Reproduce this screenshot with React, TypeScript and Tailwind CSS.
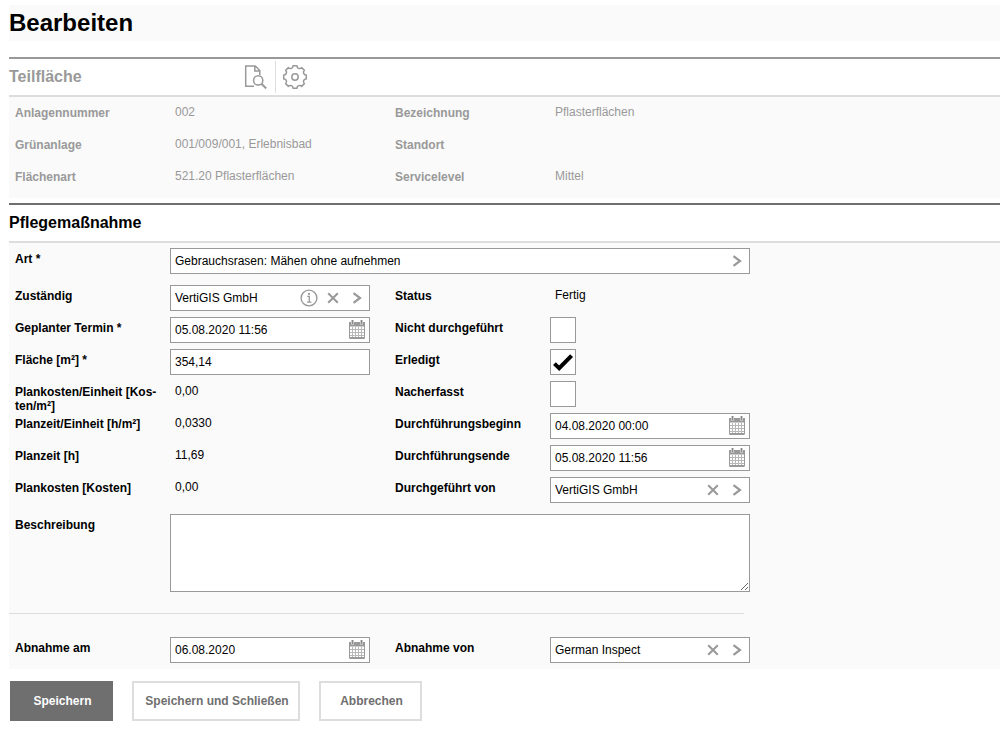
import { useState, type ReactNode } from "react";

const iconButton = "flex h-6 w-6 shrink-0 items-center justify-center text-[#999999]";
const fieldBox = "flex h-[26px] w-full min-w-0 items-center border border-[#999999] bg-white";
const fieldInput = "h-full min-w-0 flex-1 bg-transparent px-1 text-xs text-black outline-none";

function InfoIcon() {
  return (
    <svg width="18" height="18" viewBox="0 0 18 18" fill="none" stroke="currentColor" aria-hidden="true">
      <circle cx="9" cy="9" r="7.9" strokeWidth="1.4" />
      <path d="M7.2 7.4h2.1v5.4M7 13.1h4.4" strokeWidth="1.3" />
      <circle cx="9" cy="4.9" r="1.1" fill="currentColor" stroke="none" />
    </svg>
  );
}

function ClearIcon() {
  return (
    <svg width="12" height="12" viewBox="0 0 12 12" fill="none" stroke="currentColor" strokeWidth="2" aria-hidden="true">
      <path d="M1.2 1.2l9.6 9.6M10.8 1.2L1.2 10.8" />
    </svg>
  );
}

function ChevronIcon() {
  return (
    <svg width="10" height="12" viewBox="0 0 10 12" fill="none" stroke="currentColor" strokeWidth="2.2" aria-hidden="true">
      <path d="M1.5 1.2L8 6l-6.5 4.8" />
    </svg>
  );
}

function CalendarIcon() {
  return (
    <svg width="18" height="20" viewBox="0 0 18 20" fill="none" aria-hidden="true">
      <rect x="1.5" y="2.5" width="15" height="16" rx="1" fill="#ffffff" stroke="#999999" />
      <path d="M1 2h16v4.5H1z" fill="#999999" />
      <path d="M4.5 0v4.5M13.5 0v4.5" stroke="#e4e4e4" strokeWidth="3" />
      <path d="M4.5 0v4M13.5 0v4" stroke="#8a8a8a" strokeWidth="1.6" />
      <path d="M4.5 7v10M7.5 7v10M10.5 7v10M13.5 7v10M2 9.5h14M2 12.5h14M2 15.5h14" stroke="#b8b8b8" strokeWidth="1" />
      <path d="M1.5 18h15" stroke="#999999" strokeWidth="2" />
    </svg>
  );
}

function DocumentSearchIcon() {
  return (
    <svg width="24" height="24" viewBox="0 0 24 24" fill="none" stroke="currentColor" strokeWidth="1.5" aria-hidden="true">
      <path d="M10 21.3H1.7V.9h9.6l4.5 4.7v4.6M10.8 1v5h4.8" />
      <circle cx="14.2" cy="15.4" r="4.6" />
      <path d="M17.4 18.8l4.8 4.6" strokeWidth="2" />
    </svg>
  );
}

function GearIcon() {
  return (
    <svg width="26" height="26" viewBox="0 0 26 26" fill="none" stroke="currentColor" strokeWidth="1.5" strokeLinejoin="round" aria-hidden="true">
      <path d="M11 1.7h4a2.6 2.6 0 0 0 4.6 1.9l2.8 2.8a2.6 2.6 0 0 0 1.9 4.6v4a2.6 2.6 0 0 0-1.9 4.6l-2.8 2.8a2.6 2.6 0 0 0-4.6 1.9h-4a2.6 2.6 0 0 0-4.6-1.9l-2.8-2.8a2.6 2.6 0 0 0-1.9-4.6v-4a2.6 2.6 0 0 0 1.9-4.6l2.8-2.8a2.6 2.6 0 0 0 4.6-1.9z" />
      <circle cx="13" cy="13" r="3.2" />
    </svg>
  );
}

function Row({ id, label, children }: { id?: string; label: ReactNode; children?: ReactNode }) {
  const Tag = id ? "label" : "span";
  return (
    <div className="grid h-8 grid-cols-[155px_minmax(0,1fr)] items-start">
      <Tag htmlFor={id} className="pt-1 pr-2 font-bold">
        {label}
      </Tag>
      {children}
    </div>
  );
}

function Value({ children }: { children?: ReactNode }) {
  return <span className="pt-[3px] pl-[5px]">{children}</span>;
}

function LookupField({ id, initial, info, clearable }: { id: string; initial: string; info?: boolean; clearable?: boolean }) {
  const [value, setValue] = useState(initial);
  return (
    <div className={fieldBox}>
      <input id={id} type="text" value={value} onChange={(e) => setValue(e.target.value)} className={fieldInput} />
      {info && (
        <button type="button" aria-label="Info" className={iconButton}>
          <InfoIcon />
        </button>
      )}
      {clearable && (
        <button type="button" aria-label="Leeren" onClick={() => setValue("")} className={iconButton}>
          <ClearIcon />
        </button>
      )}
      <button type="button" aria-label="Auswählen" className={iconButton}>
        <ChevronIcon />
      </button>
    </div>
  );
}

function DateField({ id, initial }: { id: string; initial: string }) {
  return (
    <div className={fieldBox}>
      <input id={id} type="text" defaultValue={initial} className={fieldInput} />
      <button type="button" aria-label="Kalender" className={iconButton}>
        <CalendarIcon />
      </button>
    </div>
  );
}

function CheckField({ id, checked }: { id: string; checked?: boolean }) {
  return (
    <span className="relative block h-[26px] w-[26px]">
      <input
        id={id}
        type="checkbox"
        defaultChecked={checked}
        className="peer block h-[26px] w-[26px] appearance-none border border-[#999999] bg-white"
      />
      <svg
        viewBox="0 0 26 26"
        fill="none"
        stroke="#000000"
        strokeWidth="4"
        aria-hidden="true"
        className="pointer-events-none absolute inset-0 hidden h-[26px] w-[26px] peer-checked:block"
      >
        <path d="M4.4 14.6l4.8 4.6L21.6 6.6" />
      </svg>
    </span>
  );
}

const columns = "grid max-w-[735px] grid-cols-2 gap-x-[25px]";

export default function App() {
  return (
    <form
      className="pt-[5px] pl-[9px] text-xs leading-[14px] text-black"
      style={{ fontFamily: '"Liberation Sans", Arial, sans-serif' }}
      onSubmit={(e) => e.preventDefault()}
    >
      <h1 className="bg-[#fafafa] text-2xl leading-9 font-bold">Bearbeiten</h1>

      <section className="mt-4 border-t-2 border-[#999999] text-[#999999]">
        <header className="flex h-[38px] items-center border-b-2 border-[#dddddd]">
          <h2 className="w-[227px] text-base font-bold">Teilfläche</h2>
          <button type="button" aria-label="Objekt anzeigen" className="flex h-8 w-10 items-center justify-center border-r border-[#dddddd]">
            <DocumentSearchIcon />
          </button>
          <button type="button" aria-label="Einstellungen" className="flex h-8 w-[38px] items-center justify-center">
            <GearIcon />
          </button>
        </header>
        <div className="bg-[#fafafa] pt-[5px] pl-1.5">
          <div className={columns}>
            <div>
              <Row label="Anlagennummer"><Value>002</Value></Row>
              <Row label="Grünanlage"><Value>001/009/001, Erlebnisbad</Value></Row>
              <Row label="Flächenart"><Value>521.20 Pflasterflächen</Value></Row>
            </div>
            <div>
              <Row label="Bezeichnung"><Value>Pflasterflächen</Value></Row>
              <Row label="Standort"><Value /></Row>
              <Row label="Servicelevel"><Value>Mittel</Value></Row>
            </div>
          </div>
        </div>
      </section>

      <section className="mt-[5px] border-t-2 border-[#6f6f6f]">
        <h2 className="border-b-2 border-[#dddddd] text-base leading-9 font-bold">Pflegemaßnahme</h2>
        <div className="bg-[#fafafa] pt-[5px]">
          <div className="pl-1.5">
            <div className="mb-[5px] max-w-[735px]">
              <Row id="art" label="Art *">
                <LookupField id="art" initial="Gebrauchsrasen: Mähen ohne aufnehmen" />
              </Row>
            </div>
            <div className={columns}>
              <div>
                <Row id="zustaendig" label="Zuständig"><LookupField id="zustaendig" initial="VertiGIS GmbH" info clearable /></Row>
                <Row id="termin" label="Geplanter Termin *"><DateField id="termin" initial="05.08.2020 11:56" /></Row>
                <Row id="flaeche" label="Fläche [m²] *">
                  <div className={fieldBox}>
                    <input id="flaeche" type="text" defaultValue="354,14" className={fieldInput} />
                  </div>
                </Row>
                <Row label={<>Plankosten/Einheit [Kos&shy;ten/m²]</>}><Value>0,00</Value></Row>
                <Row label="Planzeit/Einheit [h/m²]"><Value>0,0330</Value></Row>
                <Row label="Planzeit [h]"><Value>11,69</Value></Row>
                <Row label="Plankosten [Kosten]"><Value>0,00</Value></Row>
              </div>
              <div>
                <Row label="Status"><Value>Fertig</Value></Row>
                <Row id="nicht" label="Nicht durchgeführt"><CheckField id="nicht" /></Row>
                <Row id="erledigt" label="Erledigt"><CheckField id="erledigt" checked /></Row>
                <Row id="nacherfasst" label="Nacherfasst"><CheckField id="nacherfasst" /></Row>
                <Row id="beginn" label="Durchführungsbeginn"><DateField id="beginn" initial="04.08.2020 00:00" /></Row>
                <Row id="ende" label="Durchführungsende"><DateField id="ende" initial="05.08.2020 11:56" /></Row>
                <Row id="durch" label="Durchgeführt von"><LookupField id="durch" initial="VertiGIS GmbH" clearable /></Row>
              </div>
            </div>
            <div className="mt-[5px] grid max-w-[735px] grid-cols-[155px_minmax(0,1fr)] items-start">
              <label htmlFor="beschreibung" className="pt-1 font-bold">Beschreibung</label>
              <textarea id="beschreibung" className="block h-[78px] w-full resize border border-[#999999] bg-white p-1 outline-none" />
            </div>
          </div>
          <hr className="mt-[21px] mb-[23px] max-w-[735px] border-[#dddddd]" />
          <div className="pl-1.5">
            <div className={columns}>
              <Row id="abnahme-am" label="Abnahme am"><DateField id="abnahme-am" initial="06.08.2020" /></Row>
              <Row id="abnahme-von" label="Abnahme von"><LookupField id="abnahme-von" initial="German Inspect" clearable /></Row>
            </div>
          </div>
        </div>
      </section>

      <div className="flex flex-wrap gap-[19px] pt-3 pb-2 pl-px font-bold text-[#6f6f6f]">
        <button type="submit" className="h-10 w-[103px] border-2 border-[#6f6f6f] bg-[#6f6f6f] pl-0.5 text-white">Speichern</button>
        <button type="button" className="h-10 w-[168px] border-2 border-[#dddddd] bg-white pl-0.5">Speichern und Schließen</button>
        <button type="button" className="h-10 w-[103px] border-2 border-[#dddddd] bg-white pl-0.5">Abbrechen</button>
      </div>
    </form>
  );
}
